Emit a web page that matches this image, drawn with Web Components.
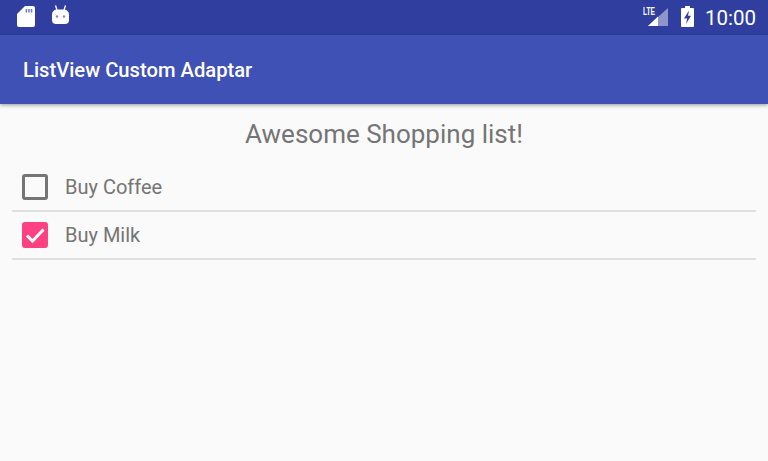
<!DOCTYPE html>
<html>
<head>
<meta charset="utf-8">
<title>ListView Custom Adaptar</title>
<style>
	html, body {
		margin: 0;
		height: 100%;
		background: #fafafa;
		font-family: Roboto, sans-serif;
	}
	body {
		width: 768px;
		height: 461px;
		overflow: hidden;
		display: flex;
		flex-direction: column;
	}
</style>
</head>
<body>
<status-bar></status-bar>
<app-bar>ListView Custom Adaptar</app-bar>
<shopping-list heading="Awesome Shopping list!">
	<shopping-item>Buy Coffee</shopping-item>
	<shopping-item checked>Buy Milk</shopping-item>
</shopping-list>
<script>
'use strict'

class StatusBar extends HTMLElement {
	constructor() {
		super()
		const shadowroot = this.attachShadow({ mode: 'open' })
		shadowroot.innerHTML = `
			<style>
				:host {
					display: flex;
					flex: none;
					height: 35px;
					align-items: flex-start;
					background: #303f9f;
					color: #fff;
					padding: 0 12px 0 17px;
				}
				svg {
					display: block;
					flex: none;
				}
				.sd,
				.robot,
				.battery {
					margin-top: 6px;
				}
				.robot {
					margin-top: 5px;
					margin-left: 17px;
				}
				.spacer {
					flex: 1;
				}
				.signal {
					margin-top: 7px;
				}
				.battery {
					margin-left: 13px;
				}
				.clock {
					margin-left: 11px;
					font-size: 20.5px;
					line-height: 36px;
				}
			</style>
			<svg class="sd" width="18" height="21" viewBox="0 0 18 21">
				<path fill="#fff" d="M8 0H16a2 2 0 0 1 2 2V19a2 2 0 0 1-2 2H2a2 2 0 0 1-2-2V8Z"/>
				<path fill="#303f9f" d="M8.6 3h1.5v3.4H8.6ZM11.2 3h1.5v3.4h-1.5ZM13.8 3h1.5v3.4h-1.5Z" opacity="0.7"/>
			</svg>
			<svg class="robot" width="17" height="20" viewBox="0 0 17 20">
				<path fill="none" stroke="#fff" stroke-width="1.3" d="M3.5 0.5L5 5M13.5 0.5L12 5"/>
				<path fill="#fff" d="M5 4.5h7a5 5 0 0 1 5 5v5.5a4 4 0 0 1-4 4H4a4 4 0 0 1-4-4V9.500a5 5 0 0 1 5-5Z"/>
				<circle cx="5" cy="11.500" r="1.200" fill="#7f88c8"/>
				<circle cx="12" cy="11.500" r="1.200" fill="#7f88c8"/>
			</svg>
			<span class="spacer"></span>
			<svg class="signal" width="25" height="20" viewBox="0 0 25 20">
				<text x="0" y="8" fill="#fff" font-family="'Liberation Sans', sans-serif" font-size="10" font-weight="700" textLength="12" lengthAdjust="spacingAndGlyphs">LTE</text>
				<path fill="#fff" fill-opacity="0.45" d="M25 1V19H5Z"/>
				<path fill="#fff" d="M15 9.500V19H5Z"/>
			</svg>
			<svg class="battery" width="13" height="21" viewBox="0 0 13 21">
				<path fill="#fff" d="M4 0h5v2h3a1 1 0 0 1 1 1v17a1 1 0 0 1-1 1H1a1 1 0 0 1-1-1V3a1 1 0 0 1 1-1h3Z"/>
				<path fill="#303f9f" d="M8 4.500L3 12.500h3.200L5 18l5-8.200H7Z"/>
			</svg>
			<span class="clock">10:00</span>`
	}
}

class AppBar extends HTMLElement {
	constructor() {
		super()
		const shadowroot = this.attachShadow({ mode: 'open' })
		shadowroot.innerHTML = `
			<style>
				:host {
					display: flex;
					flex: none;
					position: relative;
					height: 69px;
					align-items: center;
					box-sizing: border-box;
					padding: 0 23px 0;
					background: #3f51b5;
					color: #fff;
					font-size: 20.2px;
					font-weight: 500;
					box-shadow: 0 1px 4px rgb(0 0 0 / 40%);
				}
			</style>
			<slot></slot>`
	}
}

class ShoppingList extends HTMLElement {
	constructor() {
		super()
		const shadowroot = this.attachShadow({ mode: 'open' })
		shadowroot.innerHTML = `
			<style>
				:host {
					display: block;
					padding: 0 12px;
				}
				h2 {
					margin: 0;
					height: 60px;
					line-height: 60px;
					text-align: center;
					font-size: 26px;
					font-weight: 400;
					color: #757575;
				}
			</style>
			<h2></h2>
			<slot></slot>`
		shadowroot.querySelector('h2').textContent = this.getAttribute('heading')
	}
}

class ShoppingItem extends HTMLElement {
	static get observedAttributes() {
		return ['checked']
	}

	get checked() {
		return this.hasAttribute('checked')
	}

	constructor() {
		super()
		const shadowroot = this.attachShadow({ mode: 'open' })
		shadowroot.innerHTML = `
			<style>
				:host {
					display: flex;
					height: 46px;
					align-items: center;
					border-bottom: 2px solid #dfdfdf;
					color: #757575;
					font-size: 20px;
				}
				.box {
					box-sizing: border-box;
					width: 26px;
					height: 26px;
					margin-left: 10px;
					margin-right: 17px;
					border: 3px solid #757575;
					border-radius: 3px;
				}
				:host([checked]) .box {
					border: none;
					background: #ff4081;
				}
				svg {
					display: none;
				}
				:host([checked]) svg {
					display: block;
				}
			</style>
			<div class="box">
				<svg width="26" height="26" viewBox="0 0 26 26">
					<path fill="none" stroke="#fff" stroke-width="3" d="M5 13.500L10.500 19L21.500 7.500"/>
				</svg>
			</div>
			<slot></slot>`
	}
}

customElements.define('status-bar', StatusBar)
customElements.define('app-bar', AppBar)
customElements.define('shopping-list', ShoppingList)
customElements.define('shopping-item', ShoppingItem)
</script>
</body>
</html>
